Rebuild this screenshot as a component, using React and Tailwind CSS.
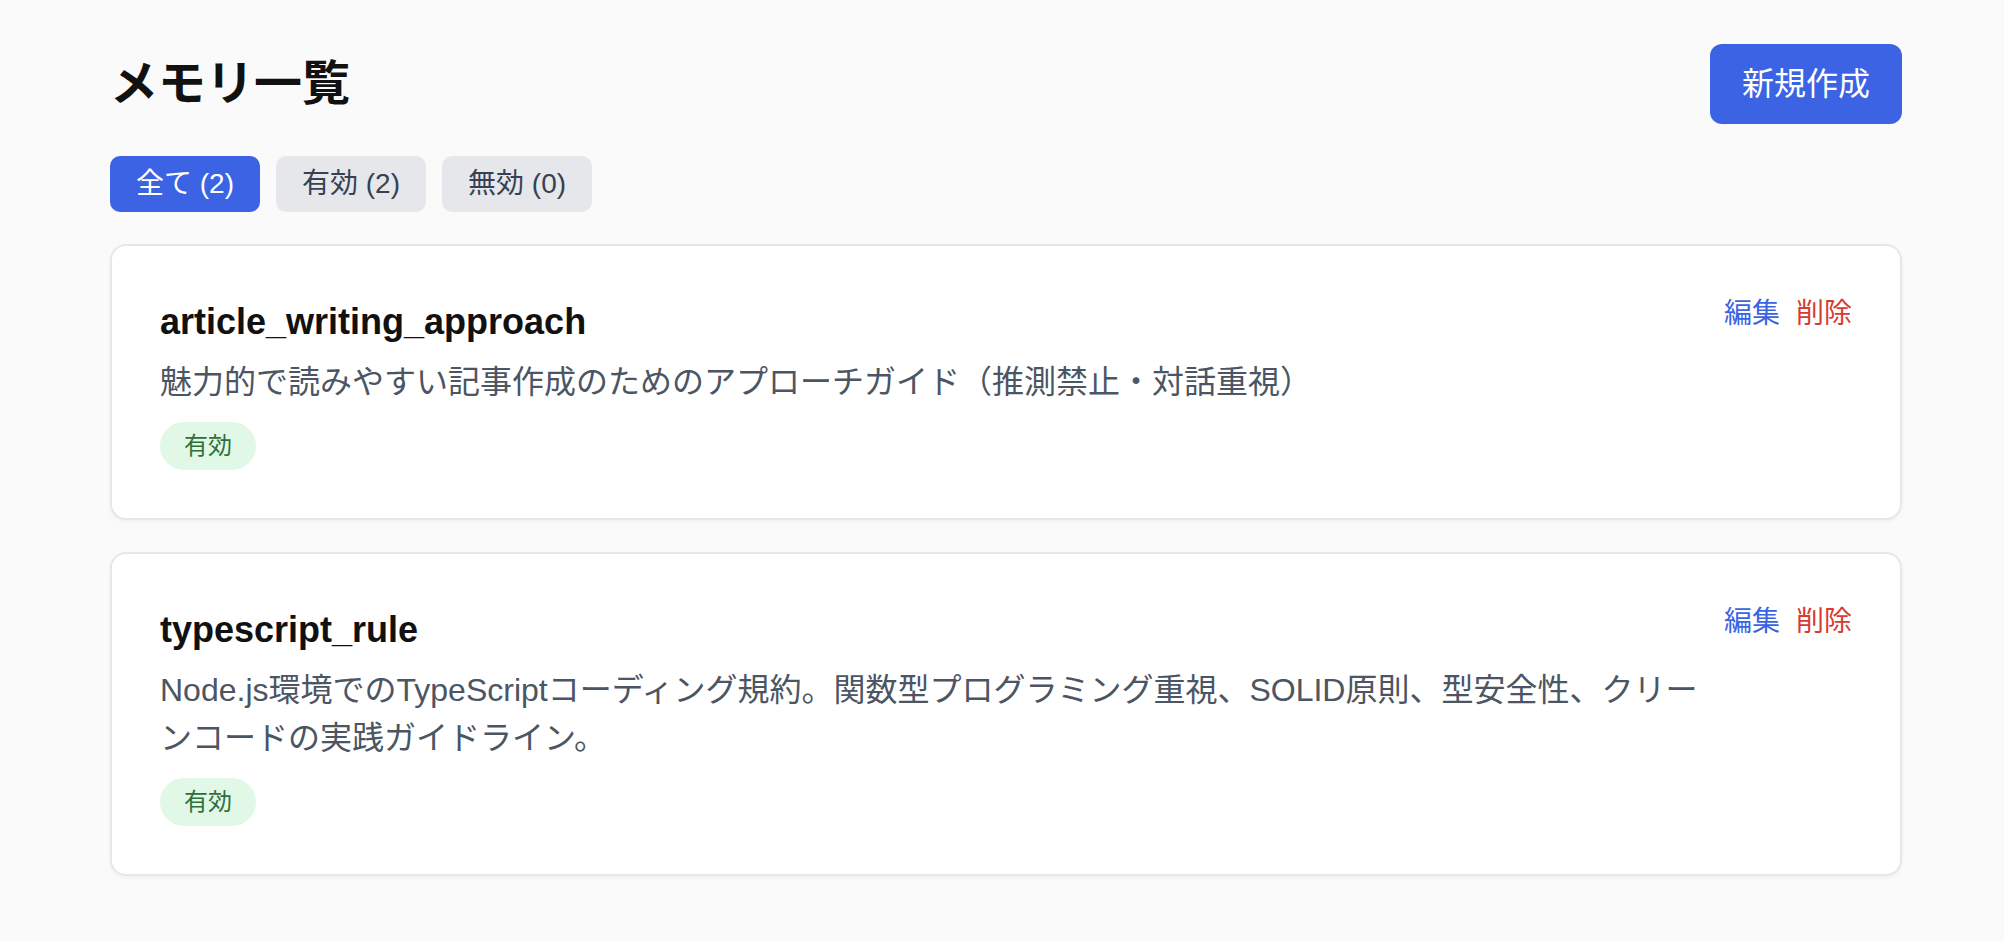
import React from "react";

const memories = [
  {
    name: "article_writing_approach",
    desc: "魅力的で読みやすい記事作成のためのアプローチガイド（推測禁止・対話重視）",
  },
  {
    name: "typescript_rule",
    desc: "Node.js環境でのTypeScriptコーディング規約。関数型プログラミング重視、SOLID原則、型安全性、クリーンコードの実践ガイドライン。",
  },
];

export default function App() {
  return (
    <div
      className="min-h-[942px] w-full bg-[#fafafa] text-[#111111]"
      style={{ fontFamily: '"Liberation Sans", "Noto Sans CJK JP", sans-serif' }}
    >
      <div className="pl-[110px] pt-[44px]">
        <div className="w-[1792px]">
          <div className="mb-[32px] flex items-center justify-between">
            <h1 className="text-[48px] font-bold leading-[64px] text-[#111111]">メモリ一覧</h1>
            <button className="h-[80px] rounded-[12px] bg-[#3b63e3] px-[32px] text-[32px] leading-[48px] text-white">
              新規作成
            </button>
          </div>

          <div className="mb-[32px] flex gap-[16px]">
            <button className="h-[56px] rounded-[10px] bg-[#3b63e3] px-[26px] text-[28px] leading-[40px] text-white">
              全て (2)
            </button>
            <button className="h-[56px] rounded-[10px] bg-[#e5e7eb] px-[26px] text-[28px] leading-[40px] text-[#374151]">
              有効 (2)
            </button>
            <button className="h-[56px] rounded-[10px] bg-[#e5e7eb] px-[26px] text-[28px] leading-[40px] text-[#374151]">
              無効 (0)
            </button>
          </div>

          <div className="flex flex-col gap-[32px]">
            {memories.map((m) => (
              <div
                key={m.name}
                className="rounded-[16px] border-2 border-[#e5e7eb] bg-white p-[48px] shadow-[0_2px_4px_rgba(0,0,0,0.04)]"
              >
                <div className="flex items-start justify-between">
                  <div className="min-w-0 flex-1 pr-[12px]">
                    <h2 className="text-[36px] font-bold leading-[56px] text-[#111111]">{m.name}</h2>
                    <p className="mt-[8px] text-[32px] leading-[48px] text-[#4b5563]">{m.desc}</p>
                    <span className="mt-[16px] inline-block rounded-full bg-[#e1f8e6] px-[24px] py-[8px] text-[24px] leading-[32px] text-[#2f6f3b]">
                      有効
                    </span>
                  </div>
                  <div className="flex gap-[16px] text-[28px] leading-[40px]">
                    <button className="text-[#3b63e3]">編集</button>
                    <button className="text-[#d63b31]">削除</button>
                  </div>
                </div>
              </div>
            ))}
          </div>
        </div>
      </div>
    </div>
  );
}
